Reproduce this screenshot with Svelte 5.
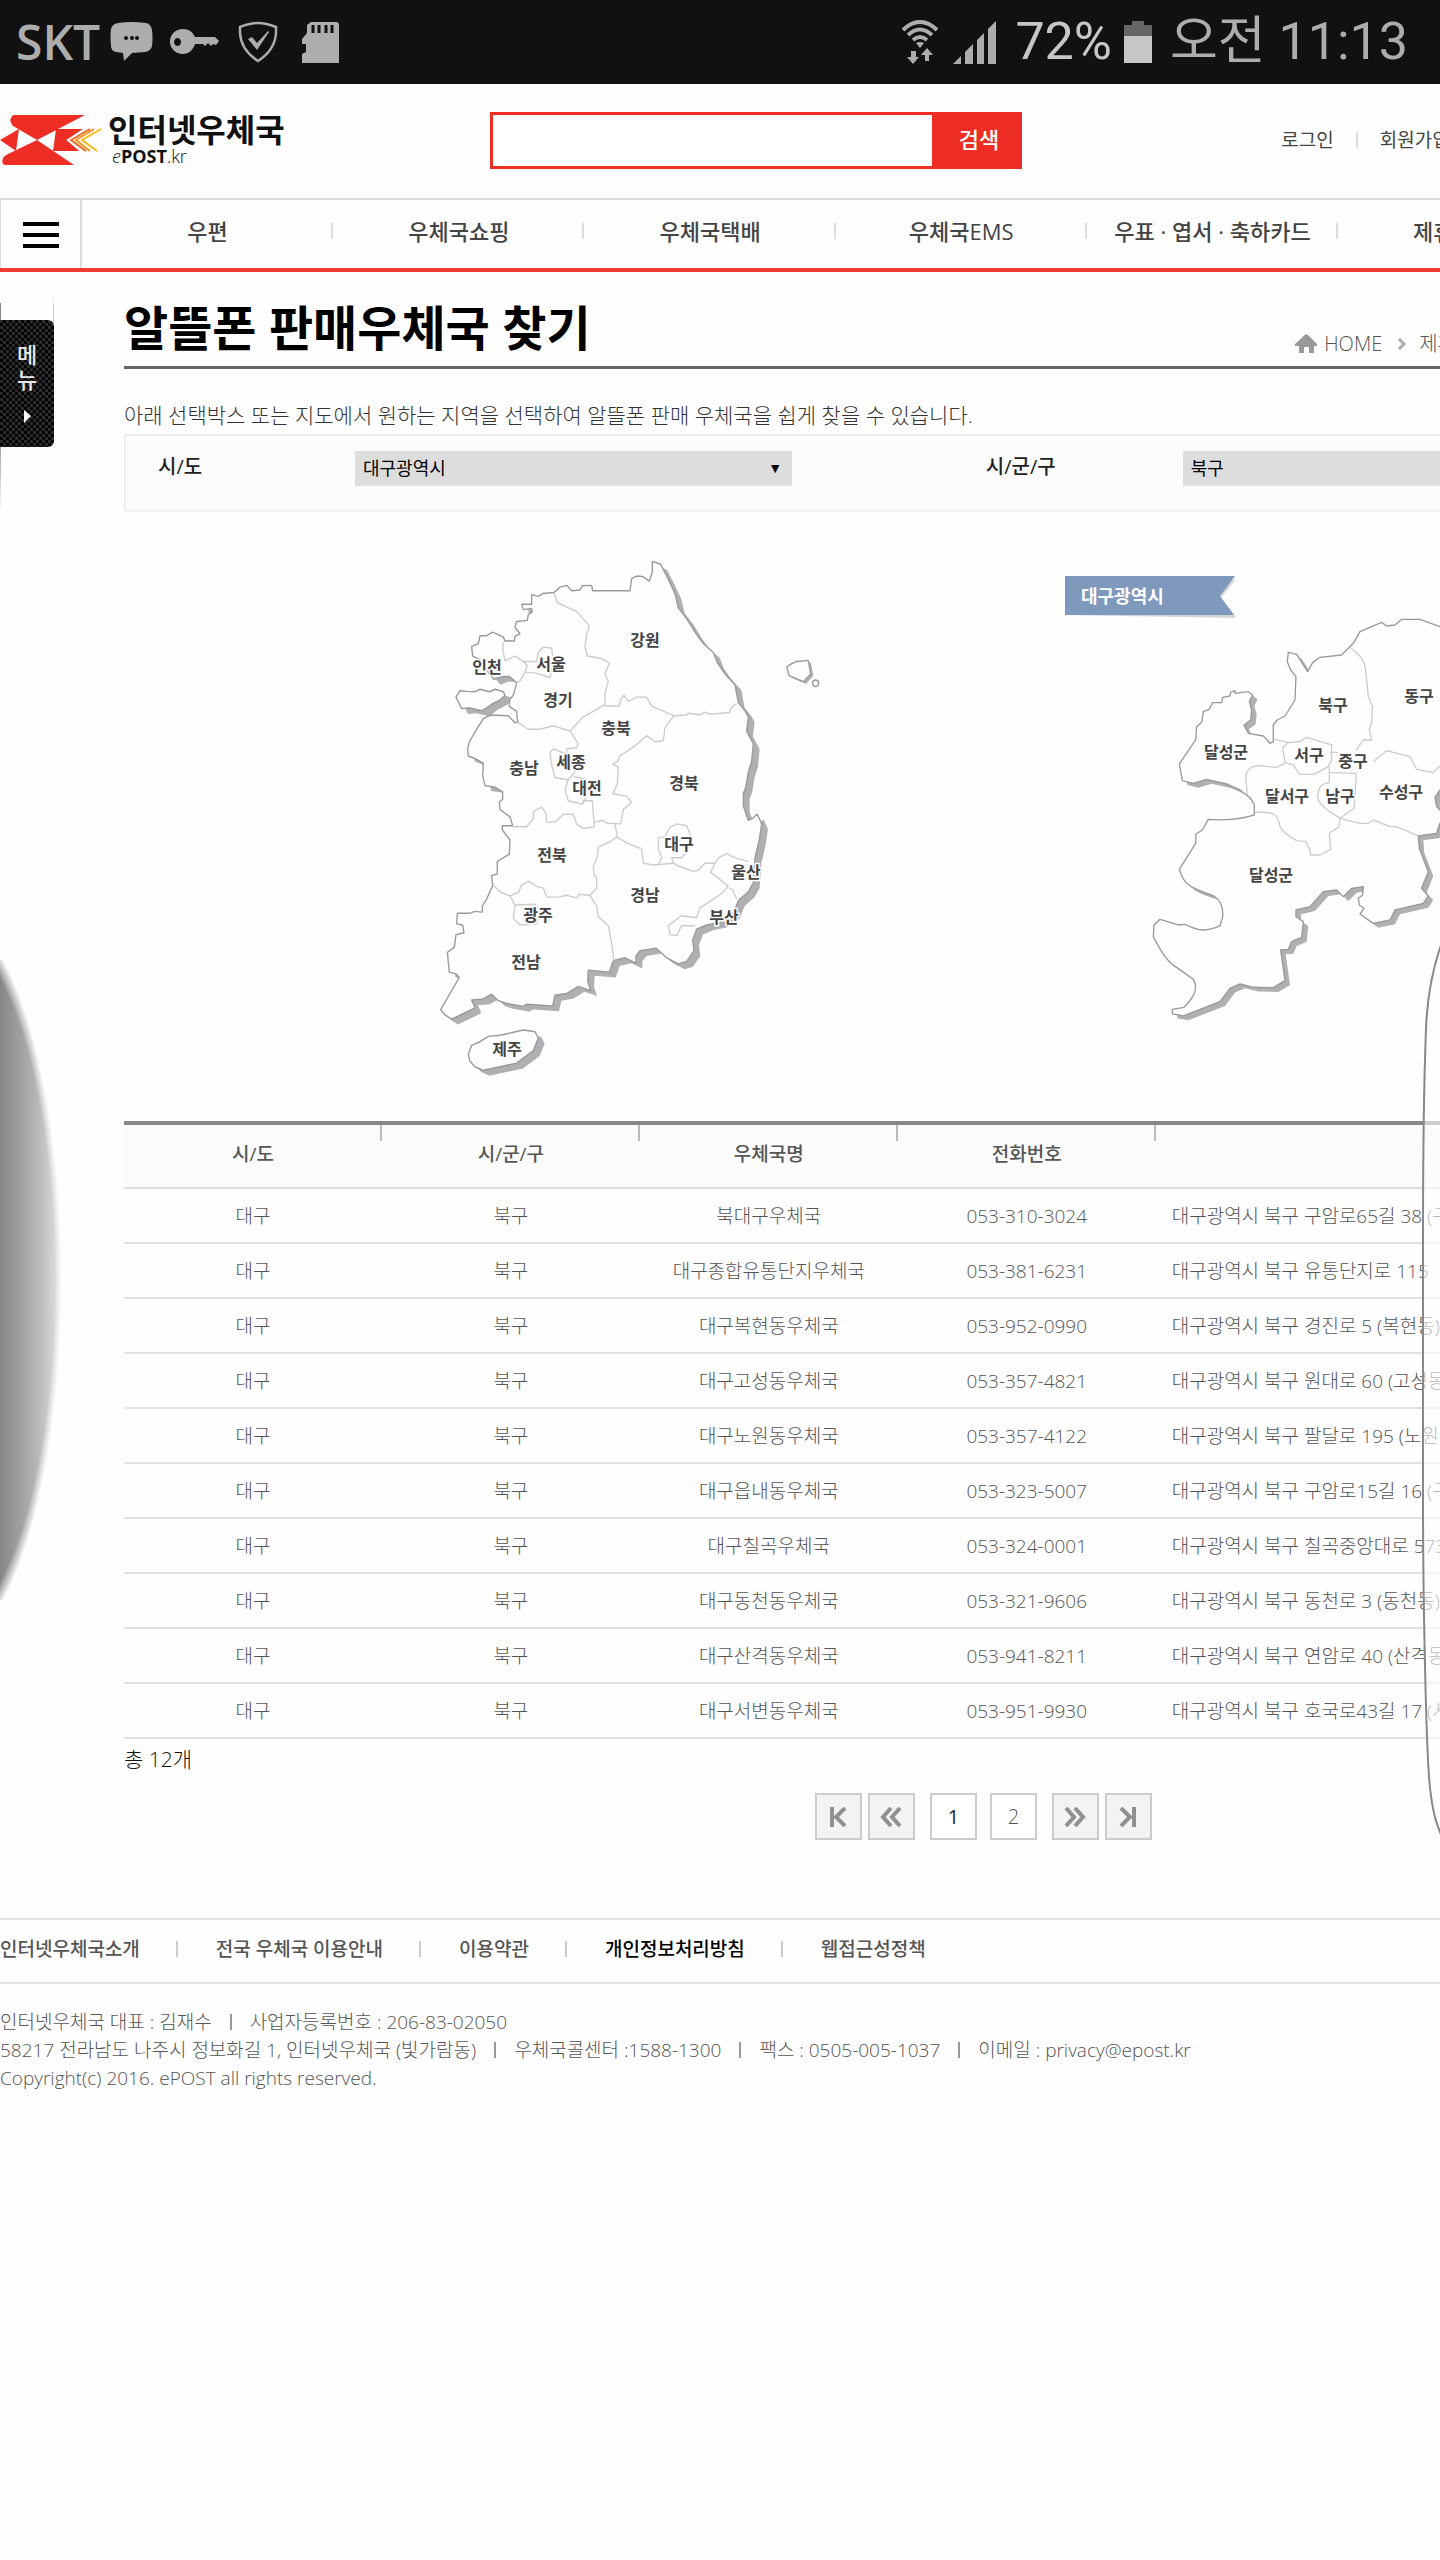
<script lang="ts">
  const menus = ["우편", "우체국쇼핑", "우체국택배", "우체국EMS", "우표 · 엽서 · 축하카드", "제휴서비스"];

  const columns = ["시/도", "시/군/구", "우체국명", "전화번호", ""];

  const offices = [
    { name: "북대구우체국", phone: "053-310-3024", address: "대구광역시 북구 구암로65길 38 (구암동)" },
    { name: "대구종합유통단지우체국", phone: "053-381-6231", address: "대구광역시 북구 유통단지로 115" },
    { name: "대구복현동우체국", phone: "053-952-0990", address: "대구광역시 북구 경진로 5 (복현동)" },
    { name: "대구고성동우체국", phone: "053-357-4821", address: "대구광역시 북구 원대로 60 (고성동)" },
    { name: "대구노원동우체국", phone: "053-357-4122", address: "대구광역시 북구 팔달로 195 (노원동)" },
    { name: "대구읍내동우체국", phone: "053-323-5007", address: "대구광역시 북구 구암로15길 16 (구암동)" },
    { name: "대구칠곡우체국", phone: "053-324-0001", address: "대구광역시 북구 칠곡중앙대로 573" },
    { name: "대구동천동우체국", phone: "053-321-9606", address: "대구광역시 북구 동천로 3 (동천동)" },
    { name: "대구산격동우체국", phone: "053-941-8211", address: "대구광역시 북구 연암로 40 (산격동)" },
    { name: "대구서변동우체국", phone: "053-951-9930", address: "대구광역시 북구 호국로43길 17 (서변동)" },
  ];

  const footerLinks = ["인터넷우체국소개", "전국 우체국 이용안내", "이용약관", "개인정보처리방침", "웹접근성정책"];

  const addressLines = [
    ["인터넷우체국 대표 : 김재수", "사업자등록번호 : 206-83-02050"],
    ["58217 전라남도 나주시 정보화길 1, 인터넷우체국 (빛가람동)", "우체국콜센터 :1588-1300", "팩스 : 0505-005-1037", "이메일 : privacy@epost.kr"],
    ["Copyright(c) 2016. ePOST all rights reserved."],
  ];

  const provinces = [
    { name: "강원", x: 225, y: 100 },
    { name: "인천", x: 67, y: 127 },
    { name: "서울", x: 131, y: 124 },
    { name: "경기", x: 138, y: 160 },
    { name: "충북", x: 196, y: 188 },
    { name: "충남", x: 104, y: 228 },
    { name: "세종", x: 151, y: 222 },
    { name: "대전", x: 167, y: 248 },
    { name: "경북", x: 264, y: 243 },
    { name: "전북", x: 132, y: 315 },
    { name: "대구", x: 259, y: 304 },
    { name: "울산", x: 326, y: 332 },
    { name: "경남", x: 225, y: 355 },
    { name: "부산", x: 304, y: 377 },
    { name: "광주", x: 118, y: 375 },
    { name: "전남", x: 106, y: 422 },
    { name: "제주", x: 87, y: 509 },
  ];

  const districts = [
    { name: "북구", x: 293, y: 145 },
    { name: "동구", x: 379, y: 136 },
    { name: "달성군", x: 186, y: 192 },
    { name: "서구", x: 269, y: 195 },
    { name: "중구", x: 313, y: 201 },
    { name: "달서구", x: 247, y: 236 },
    { name: "남구", x: 300, y: 236 },
    { name: "수성구", x: 361, y: 232 },
    { name: "달성군", x: 231, y: 315 },
  ];

  const mainland =
    "M697 60L722 68L745 110L765 150L775 190L800 220L830 265L850 290L880 315L893 345L915 375L945 405L955 455L975 478L985 495L980 535L1000 570L995 620L985 650L978 690L970 710L970 745L985 785L1000 778L1012 768L1025 795L1018 840L1005 890L1000 960L985 985L955 1010L940 1045L900 1070L860 1078L830 1090L818 1120L822 1150L800 1180L775 1187L740 1170L708 1143L660 1150L648 1165V1185L615 1170L580 1178L568 1210L505 1205L503 1235L512 1262L475 1250L440 1270L405 1275L398 1305L320 1300L310 1306L260 1298L235 1290L215 1272L190 1285L155 1288L165 1310L95 1342L75 1330L62 1315L118 1225L108 1215L88 1210L82 1155L103 1140L108 1105L132 1100L128 1078L110 1075L112 1045L150 1045L165 1040L187 1042V1025L200 1005L218 968L215 940L232 935V900L268 880L270 840L247 812V800H278L270 775L240 755L238 735L248 725V705L225 692L195 688L188 660L190 625L165 612L145 605L143 585L148 565L170 530L190 500L212 490L265 492L285 512L293 510L290 480L267 465L270 445L280 435L290 400L268 382L245 382L222 390L196 360L180 335L158 325L155 298L175 290L180 268L200 268L218 258L250 272L255 283H283L285 270L300 262L285 245L290 228L322 225L325 208L337 202L335 192L310 195L305 180L335 180V153L355 158L368 150L402 147L420 132L440 127L455 142L480 140L487 128L515 127L518 142H630L635 108L650 101L668 102L688 115L697 90Z";
  const westIsland = "M108 440L120 422L140 424L165 425L180 418L210 425L225 418L250 425L255 435L240 448L215 460L200 470L185 478L150 470L125 472Z";
  const jeju = "M145 1440L155 1415L180 1405L205 1390L240 1387L310 1372L345 1377L355 1395L340 1430L290 1465L240 1475L190 1485L165 1475L150 1460Z";
  const ulleung = "M1100 355L1112 348L1130 340L1165 337L1172 375L1150 397L1108 380Z";
  const koreaBorders =
    "M402 147L412 175L445 190L470 200L508 240L500 265L495 300L502 325L545 332L568 345L555 375L565 395L555 430V465H598L603 445L612 435L625 452L650 440H680L695 465L762 492L800 490L805 485L840 490L855 482L870 488L928 483L935 468L950 458M555 460L520 480L490 495L450 535L400 520L360 530H325L293 510M450 535L475 570L470 582L440 585V600M390 595L400 585L440 600L465 650L445 672L405 665L395 630ZM460 662L500 670L495 730L487 740L445 730L435 700L445 670M487 740L490 730H517L523 803M762 492L735 525L730 562L705 565L680 548L640 580L598 605L595 618L578 628L595 635L592 685L578 710L620 718L635 735L610 755L602 795L560 793L548 785L523 790M278 803H320L340 780V760L365 748L378 765L380 790H405L430 768H460L470 795L490 808L523 803M585 795L592 830L570 845L535 860L532 885L520 915L523 940L530 945V975L510 995L478 992L470 1003L440 995L415 1000L380 1000L370 975L350 970L325 955L303 968L297 985L270 997L240 985L218 965M270 997L285 1022L345 1020L360 1040L350 1075L300 1078L280 1060L285 1022M510 995L530 1025L535 1055L565 1080L575 1130L582 1178M592 832L620 848L665 865L670 905L700 910L760 905L780 915L820 928L835 925L855 905H885L895 890L920 878L945 890L985 900M715 908L725 890L715 865V835L735 830L750 805L770 795L800 800L815 835L805 870L785 890L755 890L760 905M885 905L872 930L925 970L905 990L840 1030L830 1058L785 1052L745 1080L750 1105L770 1108L785 1080L825 1080M928 975L938 980L950 1005M250 285L248 305L255 338L285 325L310 340L350 340L355 315L370 300L395 303L400 340L390 385L345 372L315 370L300 395L290 400M310 340L322 352L315 370";

  const daegu =
    "M745 277L742 305L752 330L768 350L765 420L735 468L712 480L700 495V545L690 550L670 528L625 520L612 495L632 480L635 450L628 425L638 405L625 395L585 400L585 392L572 397L570 408L548 412L545 428L518 428L508 448L490 455L485 487L470 500L467 540L418 612L427 662L460 670L500 658L560 672L600 690L632 715L643 735V765C600 780 560 782 505 778L487 810L468 822L467 850L418 928C430 970 445 980 500 1000C540 1008 550 1040 548 1070L540 1098C500 1115 480 1115 435 1093L415 1095L360 1078L342 1095L340 1130C370 1190 395 1215 410 1222L460 1258C480 1290 455 1320 432 1342L397 1348V1362L430 1368L540 1325L570 1285L600 1272L640 1282L700 1283L735 1262L730 1225L722 1170L745 1168L755 1145L785 1132L790 1085L768 1070V1050L810 1040L850 995L890 990L910 1010L935 985L970 980L968 1005L955 1015L958 1035L972 1045L960 1062L1000 1090L1050 1080L1065 1050L1150 1030L1165 1008L1145 985L1165 935L1138 865L1135 828L1190 820L1200 790L1220 770L1190 740L1185 712L1200 690L1260 660V230L1200 200L1140 178H1085L1065 195L1040 198L1025 187L960 215L940 250L905 285L840 292L818 308L803 335L770 283Z";
  const daeguBorders =
    "M930 262C965 290 975 300 978 340L985 410L998 440L995 490L988 505L995 540L970 540L948 572M1000 605L1040 572L1110 590L1130 628L1180 638L1200 618M705 538L745 548L780 545L800 532L875 555V600L865 620L822 643H778L760 615L735 608L728 565L745 548M735 610L710 622L650 617C625 622 615 635 618 660L622 705M870 577H895M868 622V668C840 670 830 690 835 720C850 750 880 760 900 775L942 745L948 670V640L868 637M900 775L960 790L985 790L1000 780L1050 800H1070L1135 828M900 775L897 800L868 820L872 868L840 885H812L810 870L797 845L770 842C740 825 725 810 720 800C715 760 700 755 645 757";

  let city = $state("대구광역시");
  let district = $state("북구");
  let keyword = $state("");
  let page = $state(1);
</script>

<div class="screen">
  <div class="status-bar">
    <span class="carrier">SKT</span>
    <svg class="chat" width="43" height="40" viewBox="0 0 43 40">
      <path fill="#adadad" d="M8 1Q21-1 36 1Q41 2 42 8Q43 16 42 24Q41 29 35 30L22 31L14 39L13 31L6 30Q1 29 1 24Q0 14 1 7Q2 2 8 1Z" />
      <circle cx="16" cy="16" r="2" fill="#111" />
      <circle cx="22" cy="16" r="2" fill="#111" />
      <circle cx="27" cy="16" r="2" fill="#111" />
    </svg>
    <svg class="key" width="49" height="28" viewBox="0 0 49 28">
      <path fill="#adadad" fill-rule="evenodd" d="M13 1C20 1 23 5 25 9H45L49 13L46 17L43 16L41 18L38 15L35 18L33 16H25C23 22 19 26 13 26C5 26 0 20 0 13.500S5 1 13 1ZM7.500 10A3.500 4 0 1 0 7.510 10Z" />
    </svg>
    <svg class="shield" width="40" height="42" viewBox="0 0 40 42">
      <path fill="none" stroke="#adadad" stroke-width="2.500" d="M20 2Q12 2 2 6V12Q3 29 20 40Q37 29 38 12V6Q28 2 20 2Z" />
      <path fill="#adadad" d="M10 18L14 16L19 22L30 10L31 11L19 29Z" />
    </svg>
    <svg width="37" height="42" viewBox="0 0 37 42">
      <path fill="#adadad" d="M9 1H34Q37 1 37 4V42H0V33L4 31V23H0V18L5 12V4Z" />
      <path stroke="#111" stroke-width="3" d="M11 4V12M17 4V12M24 4V12M30 4V12" />
    </svg>

    <svg class="wifi" width="38" height="44" viewBox="0 0 38 44">
      <g fill="none" stroke="#adadad" stroke-width="4">
        <path d="M2 10Q19-6 36 10" />
        <path d="M7 15Q19 4 31 15" />
        <path d="M12 20Q19 14 26 20" />
      </g>
      <path fill="#adadad" d="M15 23Q19 21 23 23L19 28ZM10 31H15V37H18L12 44L6 37H10ZM24 41V35H20L26 28L32 35H28V41Z" />
    </svg>
    <svg class="signal" width="44" height="43" viewBox="0 0 44 43">
      <path fill="#adadad" d="M0 43L8 35V43ZM12 43V31L20 23V43ZM24 43V19L31 12V43ZM35 43V8L43 0V43Z" />
    </svg>
    <span class="percent">72%</span>
    <svg class="battery" width="28" height="42" viewBox="0 0 28 42">
      <path fill="#666" d="M8 0H20V4H28V15H0V4H8Z" />
      <path fill="#c6c6c6" d="M0 15H28V42H0Z" />
    </svg>
    <span class="clock">오전 11:13</span>
  </div>

  <header class="header">
    <a class="logo" href="#home">
      <svg width="102" height="50" viewBox="0 0 102 50">
        <g fill="#ee2e25">
          <path d="M14 0H85L37 25L13 11Q9 6 11 3Q12 0 14 0Z" />
          <path d="M37 25L74 50H5Q1 49 3 43Q4 41 8 39Z" />
          <path d="M0 25L19 14L16 36Z" />
          <path d="M56 14H86L67 25L82 36H53Z" />
        </g>
        <g fill="none" stroke-width="2">
          <path stroke="#fff" d="M86 13L68 25L82 37" />
          <path stroke="#f26a21" d="M90 14L71 25L86 36" />
          <path stroke="#f7941d" d="M94 14L76 25L90 36" />
          <path stroke="#fdb913" d="M101 14L82 25L97 36" />
        </g>
      </svg>
      <span class="logo-text">
        <strong>인터넷우체국</strong>
        <span class="logo-sub"><i>e</i><b>POST</b>.kr</span>
      </span>
    </a>
    <form class="search" onsubmit={(e) => e.preventDefault()}>
      <input type="text" aria-label="검색어" bind:value={keyword} />
      <button type="submit">검색</button>
    </form>
    <div class="user-links">
      <a href="#login">로그인</a>
      <a href="#join">회원가입</a>
    </div>
  </header>

  <nav class="nav">
    <button class="all-menu" type="button" aria-label="전체메뉴">
      <span></span>
      <span></span>
      <span></span>
    </button>
    <ul>
      {#each menus as menu}
        <li><a href="#menu">{menu}</a></li>
      {/each}
    </ul>
  </nav>

  <div class="body">
    <main class="content">
      <div class="title-row">
        <h1>알뜰폰 판매우체국 찾기</h1>
        <div class="breadcrumb">
          <svg width="23" height="20" viewBox="0 0 23 20">
            <path fill="#999" d="M11 0L14 2L22 10V12H19V19H14V13H9V19H4V12H0V10Z" />
          </svg>
          <a href="#home">HOME</a>
          <svg class="chevron" width="9" height="12" viewBox="0 0 9 12">
            <path fill="none" stroke="#aaa" stroke-width="3" d="M1 1L6 6L1 11" />
          </svg>
          <a href="#partner">제휴서비스</a>
        </div>
      </div>

      <p class="guide">아래 선택박스 또는 지도에서 원하는 지역을 선택하여 알뜰폰 판매 우체국을 쉽게 찾을 수 있습니다.</p>

      <div class="filters">
        <div class="field">
          <label for="city">시/도</label>
          <div class="select">
            <select id="city" bind:value={city}>
              <option>대구광역시</option>
            </select>
          </div>
        </div>
        <div class="field">
          <label for="district">시/군/구</label>
          <div class="select">
            <select id="district" bind:value={district}>
              <option>북구</option>
            </select>
          </div>
        </div>
      </div>

      <div class="maps">
        <svg class="map" width="420" height="560" viewBox="0 0 420 560">
          <g transform="scale(.3333 .3571)">
            <g class="shade" transform="translate(19 15)">
              <path d={mainland} />
              <path d={westIsland} />
              <path d={jeju} />
            </g>
            <path class="shade" transform="translate(8 6)" d={ulleung} />
            <g class="land">
              <path d={mainland} />
              <path d={westIsland} />
              <path d={jeju} />
              <path d={ulleung} />
              <circle cx="1187" cy="401" r="9" />
            </g>
            <path class="border" d={koreaBorders} />
          </g>
          {#each provinces as place}
            <text x={place.x} y={place.y}>{place.name}</text>
          {/each}
        </svg>
        <svg class="map" width="400" height="480" viewBox="0 0 400 480">
          <path fill="#d5d5d5" d="M25 55L196 58L181 38L196 19Z" />
          <path fill="#7f99bd" d="M25 16H195L180 36L194 55H25Z" />
          <text class="ribbon" x="41" y="36">대구광역시</text>
          <g transform="scale(.3333)">
            <path class="shade" transform="translate(15 13)" d={daegu} />
            <path class="land" d={daegu} />
            <path class="border" d={daeguBorders} />
          </g>
          {#each districts as place}
            <text x={place.x} y={place.y}>{place.name}</text>
          {/each}
        </svg>
      </div>

      <table>
        <thead>
          <tr>
            {#each columns as column}
              <th scope="col">{column}</th>
            {/each}
          </tr>
        </thead>
        <tbody>
          {#each offices as office (office.phone)}
            <tr>
              <td>대구</td>
              <td>북구</td>
              <td>{office.name}</td>
              <td>{office.phone}</td>
              <td class="address">{office.address}</td>
            </tr>
          {/each}
        </tbody>
      </table>

      <p class="total">총 12개</p>

      <div class="pagination">
        <button type="button" aria-label="처음">
          <svg width="18" height="20" viewBox="0 0 18 20"><path d="M3 0V20M16 1L7 10L16 19" /></svg>
        </button>
        <button type="button" aria-label="이전">
          <svg width="22" height="20" viewBox="0 0 22 20"><path d="M11 1L3 10L11 19M20 1L12 10L20 19" /></svg>
        </button>
        <span class="pages">
          {#each [1, 2] as number}
            <button type="button" class:current={page === number} onclick={() => (page = number)}>{number}</button>
          {/each}
        </span>
        <button type="button" aria-label="다음">
          <svg width="22" height="20" viewBox="0 0 22 20"><path d="M2 1L10 10L2 19M11 1L19 10L11 19" /></svg>
        </button>
        <button type="button" aria-label="마지막">
          <svg width="18" height="20" viewBox="0 0 18 20"><path d="M15 0V20M2 1L11 10L2 19" /></svg>
        </button>
      </div>
    </main>

    <div class="side-line"></div>
    <button class="side-tab" type="button">
      <span>메</span>
      <span>뉴</span>
      <svg width="9" height="13" viewBox="0 0 9 13"><path fill="#fff" d="M1 0L8 6L1 13Z" /></svg>
    </button>
    <div class="edge-glow"></div>
    <svg class="edge-panel" width="20" height="900" viewBox="0 0 20 900">
      <path d="M22 2C12 30 7 60 6 89C4 140 3 200 3 300V560C3 640 4 680 5 725C6 770 7 820 10 848C13 875 17 885 22 897" />
    </svg>
  </div>

  <footer>
    <ul class="footer-links">
      {#each footerLinks as link}
        <li><a href="#info" class:strong={link === "개인정보처리방침"}>{link}</a></li>
      {/each}
    </ul>
    <address>
      {#each addressLines as line}
        <p>
          {#each line as part}
            <span>{part}</span>
          {/each}
        </p>
      {/each}
    </address>
  </footer>
</div>

<style>
  :global(body) {
    margin: 0;
    background: #fefefe;
  }

  .screen {
    overflow: hidden;
    font-family: "Open Sans", "Noto Sans CJK KR", sans-serif;
    font-size: 19px;
    font-weight: 300;
    line-height: 28px;
    color: #555;
  }

  a {
    color: inherit;
    text-decoration: none;
  }

  ul,
  p,
  h1 {
    margin: 0;
    padding: 0;
    list-style: none;
  }

  button,
  input,
  select {
    font: inherit;
    margin: 0;
    padding: 0;
    border: 0;
    border-radius: 0;
    box-sizing: border-box;
  }

  button {
    cursor: pointer;
  }

  svg {
    flex: none;
  }

  .status-bar {
    display: flex;
    align-items: center;
    height: 84px;
    padding: 0 32px 0 16px;
    background: #111;
    color: #adadad;
    font-family: Roboto, "Noto Sans CJK KR", sans-serif;
    font-size: 52px;
    font-weight: 400;
    line-height: 84px;
    white-space: nowrap;
  }

  .carrier {
    font-family: "Open Sans", sans-serif;
    font-size: 48px;
    font-weight: 600;
    margin-right: 10px;
  }

  .chat {
    margin-right: 17px;
  }

  .key {
    margin-right: 19px;
  }

  .shield {
    margin-right: 24px;
  }

  .wifi {
    margin-left: auto;
  }

  .signal {
    margin: 0 18px 0 14px;
  }

  .percent {
    color: #c6c6c6;
  }

  .battery {
    margin: 0 18px 0 12px;
  }

  .header {
    display: grid;
    grid-template-columns: 34% 37% 1fr;
    align-items: center;
    height: 114px;
    padding-bottom: 2px;
    box-sizing: border-box;
  }

  .logo {
    display: flex;
    align-items: center;
    gap: 6px;
    color: #111;
  }

  .logo-text {
    display: flex;
    flex-direction: column;
  }

  .logo-text strong {
    font-size: 32px;
    font-weight: 700;
    line-height: 32px;
  }

  .logo-sub {
    padding-left: 4px;
    font-size: 18px;
    line-height: 20px;
  }

  .logo-sub b {
    font-weight: 700;
  }

  .search {
    display: flex;
    height: 57px;
  }

  .search input {
    flex: 1;
    min-width: 0;
    padding: 0 12px;
    border: 3px solid #ee2e25;
    background: #fff;
    outline: none;
  }

  .search button {
    width: 87px;
    padding-bottom: 3px;
    background: #ee2e25;
    color: #fff;
    font-size: 22px;
    font-weight: 500;
  }

  .user-links {
    display: flex;
    padding-left: 62%;
    color: #444;
    font-weight: 400;
    white-space: nowrap;
  }

  .user-links a + a {
    display: flex;
    align-items: center;
  }

  .user-links a + a::before {
    content: "";
    width: 2px;
    height: 16px;
    margin: 0 22px;
    background: #ddd;
  }

  .nav {
    display: flex;
    height: 68px;
    border-top: 2px solid #ddd;
    border-bottom: 4px solid #ee3a30;
  }

  .all-menu {
    display: flex;
    flex: none;
    flex-direction: column;
    align-items: center;
    justify-content: center;
    gap: 7px;
    width: 82px;
    padding-top: 2px;
    border-left: 1px solid #ddd;
    border-right: 2px solid #ddd;
    background: transparent;
  }

  .all-menu span {
    width: 36px;
    height: 4px;
    background: #000;
  }

  .nav ul {
    display: flex;
    flex: 1;
    min-width: 0;
  }

  .nav li {
    display: flex;
    flex: 0 0 18.5%;
    align-items: center;
    justify-content: center;
    position: relative;
    padding-bottom: 6px;
    color: #444;
    font-size: 22px;
    font-weight: 500;
    white-space: nowrap;
    box-sizing: border-box;
  }

  .nav li::after {
    content: "";
    position: absolute;
    right: 0;
    width: 2px;
    height: 16px;
    background: #ddd;
  }

  .body {
    position: relative;
    padding-left: 124px;
  }

  .title-row {
    display: flex;
    align-items: flex-end;
    height: 97px;
    border-bottom: 3px solid #666;
    box-sizing: border-box;
  }

  h1 {
    flex: 0 0 89%;
    padding-bottom: 4px;
    color: #000;
    font-size: 48px;
    font-weight: 700;
    line-height: 68px;
  }

  .breadcrumb {
    display: flex;
    align-items: center;
    gap: 6px;
    padding-bottom: 8px;
    font-size: 20px;
    white-space: nowrap;
  }

  .chevron {
    margin: 0 6px 0 10px;
  }

  .guide {
    padding: 32px 0 5px;
    color: #333;
    font-size: 21px;
  }

  .filters {
    display: flex;
    height: 78px;
    border: 2px solid #eee;
    border-right: 0;
    background: #fbfbfb;
    overflow: hidden;
    box-sizing: border-box;
  }

  .field {
    display: flex;
    flex: 0 0 63%;
    padding: 15px 32px 0;
    box-sizing: border-box;
  }

  .field label {
    flex: 0 0 197px;
    color: #222;
    font-size: 20px;
    font-weight: 500;
    line-height: 32px;
  }

  .select {
    flex: 0 0 437px;
    position: relative;
  }

  .select::after {
    content: "▼";
    position: absolute;
    top: 0;
    right: 10px;
    color: #000;
    font-family: "DejaVu Sans", sans-serif;
    font-size: 14px;
    line-height: 34px;
    pointer-events: none;
  }

  select {
    width: 100%;
    height: 35px;
    padding: 0 0 2px 8px;
    background: #ddd;
    color: #000;
    font-size: 18px;
    font-weight: 400;
    appearance: none;
  }

  .maps {
    display: flex;
    gap: 200px;
    height: 609px;
    padding: 28px 0 0 296px;
    box-sizing: border-box;
  }

  .maps .map + .map {
    margin-top: 20px;
  }

  .shade {
    fill: #b0b0b2;
  }

  .land {
    fill: #fefefe;
    stroke: #999;
    stroke-width: 4;
    stroke-linejoin: round;
  }

  .border {
    fill: none;
    stroke: #ccc;
    stroke-width: 4;
    stroke-linejoin: round;
  }

  .map text {
    fill: #444;
    stroke: #fefefe;
    stroke-width: 3px;
    paint-order: stroke;
    font-size: 16px;
    font-weight: 700;
    text-anchor: middle;
    dominant-baseline: central;
  }

  .map .ribbon {
    fill: #fff;
    stroke: none;
    font-size: 18px;
    text-anchor: start;
  }

  table {
    width: 100%;
    border-collapse: collapse;
    border-top: 4px solid #888;
    table-layout: fixed;
  }

  th {
    position: relative;
    width: 19.6%;
    height: 65px;
    padding: 0 0 4px;
    border-bottom: 2px solid #ddd;
    background: #fbfbfb;
    font-weight: 500;
    box-sizing: border-box;
  }

  th:last-child {
    width: 21.6%;
  }

  th:not(:last-child)::after {
    content: "";
    position: absolute;
    top: 0;
    right: 0;
    width: 2px;
    height: 16px;
    background: #bbb;
  }

  td {
    height: 55px;
    padding: 0;
    border-bottom: 2px solid #e2e2e2;
    text-align: center;
    white-space: nowrap;
    box-sizing: border-box;
  }

  .address {
    padding-left: 16px;
    overflow: hidden;
    text-align: left;
  }

  .total {
    padding-top: 6px;
    color: #111;
    font-size: 21px;
  }

  .pagination {
    display: flex;
    gap: 6px;
    margin: 20px 0 78px;
    padding-left: 52.5%;
  }

  .pagination button {
    display: flex;
    align-items: center;
    justify-content: center;
    width: 47px;
    height: 47px;
    border: 2px solid #ccc;
    background: #f3f3f3;
    color: #555;
  }

  .pagination path {
    fill: none;
    stroke: #909090;
    stroke-width: 4;
  }

  .pages {
    display: flex;
    gap: 13px;
    margin: 0 9px;
  }

  .pages button {
    background: #fff;
    font-size: 20px;
  }

  .pages .current {
    color: #222;
    font-weight: 400;
  }

  .side-line {
    position: absolute;
    top: 31px;
    left: 0;
    width: 54px;
    height: 210px;
    border-left: 1px solid #888;
    border-right: 1px solid #ccc;
    box-sizing: border-box;
    mask-image: linear-gradient(#000 60%, transparent);
    clip-path: polygon(0 0, 100% 0, 100% 20px, 2px 20px, 2px 100%, 0 100%);
  }

  .side-tab {
    display: flex;
    flex-direction: column;
    align-items: center;
    position: absolute;
    top: 48px;
    left: 0;
    width: 54px;
    height: 127px;
    padding: 22px 0 0;
    border-radius: 0 6px 6px 0;
    background: repeating-conic-gradient(#000 0 25%, #2c2c2c 0 50%) 0 0 / 6px 6px;
    color: #e8e8e8;
    font-size: 22px;
    font-weight: 500;
    line-height: 25px;
  }

  .side-tab svg {
    margin-top: 18px;
  }

  /* shaded oval that bulges in from the left edge */
  .edge-glow {
    position: absolute;
    top: 688px;
    left: 0;
    width: 62px;
    height: 640px;
    background: linear-gradient(to right, #868686, #b0b0b0 33px, #e0e0e0 60px);
    mask-image: radial-gradient(ellipse 122px 376px at -60px 50%, #000 94%, transparent 100%);
    pointer-events: none;
  }

  .edge-panel {
    position: absolute;
    top: 668px;
    right: 0;
    fill: #fefefe;
    fill-opacity: 0.6;
    stroke: #888;
    stroke-width: 2;
    pointer-events: none;
  }

  .footer-links {
    display: flex;
    align-items: center;
    height: 66px;
    padding-bottom: 4px;
    border-top: 2px solid #e5e5e5;
    border-bottom: 2px solid #e5e5e5;
    font-weight: 500;
    white-space: nowrap;
    box-sizing: border-box;
  }

  .footer-links li {
    display: flex;
    align-items: center;
  }

  .footer-links li + li::before {
    content: "";
    width: 2px;
    height: 16px;
    margin: 0 38px 0 36px;
    background: #ccc;
  }

  .footer-links .strong {
    color: #000;
  }

  address {
    padding-top: 24px;
    font-style: normal;
    white-space: nowrap;
  }

  address p {
    display: flex;
    align-items: center;
  }

  address span {
    display: flex;
    align-items: center;
  }

  address span + span::before {
    content: "";
    width: 2px;
    height: 16px;
    margin: 0 18px;
    background: #999;
  }
</style>
